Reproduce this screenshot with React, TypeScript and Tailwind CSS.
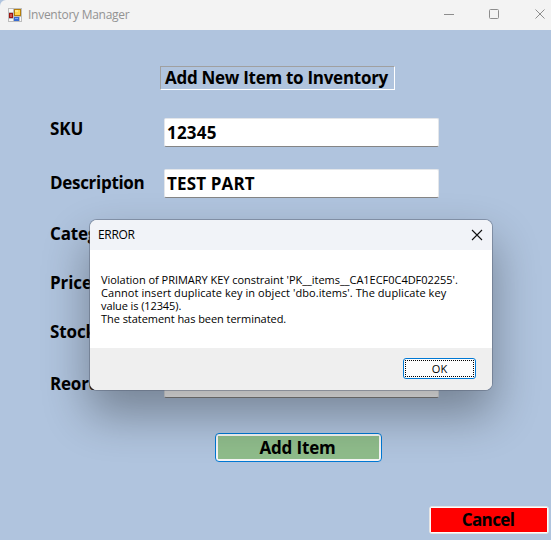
import React from "react";

const rows = [
  { label: "SKU", value: "12345", height: "h-[51px]", pad: "-mt-px", spacing: "tracking-[-0.1px]", valueSpacing: "tracking-[0.2px]" },
  { label: "Description", value: "TEST PART", height: "h-[52px]", pad: "mt-[2px]", spacing: "tracking-[-0.3px]", valueSpacing: "tracking-[0.15px]" },
  { label: "Category", value: "", height: "h-[50px]", pad: "mt-px", spacing: "tracking-[-0.2px]", valueSpacing: "" },
  { label: "Price", value: "", height: "h-[50px]", pad: "", spacing: "tracking-[-0.1px]", valueSpacing: "" },
  { label: "Stock", value: "", height: "h-[48px]", pad: "-mt-px", spacing: "tracking-[-0.1px]", valueSpacing: "" },
  { label: "Reorder", value: "", height: "h-[50px]", pad: "mt-[3px]", spacing: "tracking-[-0.2px]", valueSpacing: "" },
];

function AppIcon() {
  return (
    <svg width="14" height="14" viewBox="0 0 14 14" shapeRendering="crispEdges">
      <path d="M0 0h14v14H0z" fill="#bdbdbd" />
      <path d="M1 1h4v3H1zM1 11h4v2H1zM12 9h1v4h-1z" fill="#f7f7f7" />
      <path d="M1 5h4v5H1z" fill="#9c1410" />
      <path d="M2 6h2v3H2z" fill="#d0574c" />
      <path d="M6 1h7v7H6z" fill="#b57e0b" />
      <path d="M7 2h5v5H7z" fill="#ffd64e" />
      <path d="M7 2h3v2H7z" fill="#ffe78d" />
      <path d="M6 9h5v4H6z" fill="#376bd2" />
      <path d="M7 10h3v1H7z" fill="#82aaf2" />
    </svg>
  );
}

function TitleBar() {
  return (
    <header className="flex h-[30px] items-center rounded-tl-[6px] bg-[#f3f3f3] pl-2 text-[#929292]">
      <AppIcon />
      <span className="ml-[6px] text-[12px] leading-[16px] tracking-[-0.27px] whitespace-nowrap">Inventory Manager</span>
      <svg className="ml-auto" width="108" height="30" viewBox="0 0 108 30" fill="none" stroke="#8d8d8d">
        <path d="M1 14.5h10" />
        <rect x="46.5" y="9.5" width="9" height="9" rx="1" />
        <path d="M92.5 9.5l9 9m0-9l-9 9" />
      </svg>
    </header>
  );
}

function ErrorDialog() {
  return (
    <section className="absolute top-[220px] left-[90px] flex h-[170px] w-[402px] flex-col overflow-hidden rounded-[7px] bg-white text-black shadow-[0_0_0_1px_rgba(90,100,120,0.5),0_23px_46px_2px_rgba(0,0,0,0.33)]">
      <div className="flex h-[30px] items-center justify-between bg-[#f1f3f8] pr-[9px] pl-2">
        <span className="text-[12px] tracking-[-0.3px]">ERROR</span>
        <svg width="12" height="12" viewBox="0 0 12 12" stroke="#111" strokeWidth="1.1">
          <path d="M1 1l10 10M11 1L1 11" />
        </svg>
      </div>
      <div className="h-[98px] pt-[23px] pl-[11px] text-[11px] leading-[13px] whitespace-nowrap">
        <p className="tracking-[-0.03px]">Violation of PRIMARY KEY constraint 'PK__items__CA1ECF0C4DF02255'.</p>
        <p className="tracking-[0.07px]">Cannot insert duplicate key in object 'dbo.items'. The duplicate key</p>
        <p className="tracking-[-0.1px]">value is (12345).</p>
        <p className="tracking-[-0.05px]">The statement has been terminated.</p>
      </div>
      <div className="flex h-[42px] justify-end bg-[#efefef] pt-[10px] pr-4">
        <button className="h-[21px] w-[73px] rounded-[3px] border border-[#0078d4] bg-[#fdfdfd] p-px text-[11px]">
          <span className="flex h-full items-center justify-center border border-dotted border-black pt-px">OK</span>
        </button>
      </div>
    </section>
  );
}

export default function App() {
  return (
    <div className="relative h-[540px] w-[551px] overflow-hidden bg-[#b0c4de] font-['Open_Sans','Noto_Sans',sans-serif]">
      <TitleBar />
      <main className="flex h-[510px] flex-col text-[17px] font-bold text-black">
        <h1 className="mt-9 ml-[160px] flex h-6 w-[235px] items-center border border-t-[#a0a0a0] border-r-white border-b-white border-l-[#a0a0a0] pb-px pl-1 text-[17px] leading-none tracking-[-0.28px] whitespace-nowrap">
          Add New Item to Inventory
        </h1>
        <form className="mt-7 pl-[50px]">
          {rows.map((row) => (
            <div key={row.label} className={"flex items-start " + row.height}>
              <label className={"w-[114px] leading-[23px] whitespace-nowrap " + row.pad + " " + row.spacing}>{row.label}</label>
              <div className={"flex h-[29px] w-[275px] items-center rounded-[2px] border border-[#e3e6ea] border-b-[#858585] bg-white pb-px pl-[2px] leading-none " + row.valueSpacing}>
                {row.value}
              </div>
            </div>
          ))}
        </form>
        <button className="mt-[14px] ml-[215px] h-[29px] w-[167px] rounded-[4px] border border-[#0078d4] bg-[#f4f4f4] p-[2px]">
          <span className="flex h-full items-center justify-center bg-[#8fbc8b] pr-[2px] pb-px leading-none tracking-[-0.15px]">Add Item</span>
        </button>
        <button className="mt-[44px] ml-[429px] h-[28px] w-[120px] rounded-[3px] border border-[#e4e4e4] bg-[#fcfcfc] p-px">
          <span className="flex h-full items-center justify-center bg-[#ff0000] pr-[2px] pb-px leading-none tracking-[-0.6px]">Cancel</span>
        </button>
      </main>
      <ErrorDialog />
    </div>
  );
}
